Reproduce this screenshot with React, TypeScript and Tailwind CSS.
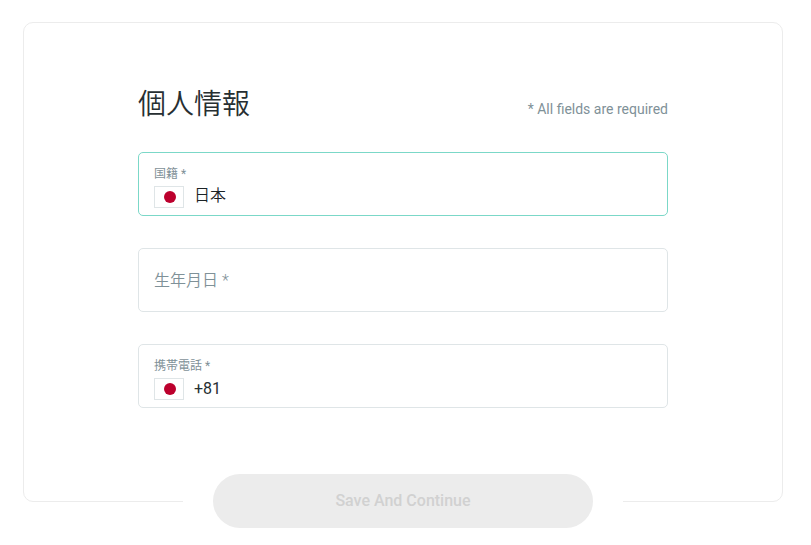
import type { ReactNode } from "react";

export default function App() {
  return (
    <main className="h-[545px] bg-white px-[23px] pt-[22px] font-['Roboto','Noto_Sans_CJK_JP',sans-serif] text-[#272f32]">
      <section className="relative h-[480px] w-[760px] rounded-[10px] border border-[#ececec] px-[114px] pt-[61px]">
        <header className="flex h-[68px] items-start justify-between">
          <h1 className="mt-px text-[28px] leading-[40px] font-[350]">個人情報</h1>
          <p className="mt-[15px] text-sm leading-5 text-[#7f9198]">* All fields are required</p>
        </header>

        <div className="flex flex-col gap-8">
          <Field label="国籍 *" active>
            <span className="text-base leading-6 font-[350] text-[#1c2326]">日本</span>
          </Field>
          <div className="flex h-16 items-center rounded-[5px] border border-[#dfe5e7] px-[15px] pt-0.5 text-base font-[350] text-[#7f9198]">
            生年月日 *
          </div>
          <Field label="携帯電話 *">
            <span className="mt-0.5 text-base leading-6">+81</span>
          </Field>
        </div>

        {/* the button sits in a gap of the card's bottom border */}
        <div className="absolute -bottom-[27px] left-[159px] flex w-[440px] justify-center bg-white">
          <button className="h-[54px] w-[380px] rounded-full bg-[#ececec] text-base font-medium text-[#d1d1d1]">
            Save And Continue
          </button>
        </div>
      </section>
    </main>
  );
}

function Field({ label, active, children }: { label: string; active?: boolean; children: ReactNode }) {
  return (
    <div
      className={
        "h-16 rounded-[5px] border px-[15px] pt-3 " +
        (active ? "border-[#7bd8c8]" : "border-[#dfe5e7]")
      }
    >
      <div className="text-xs leading-[18px] text-[#7f9198]">{label}</div>
      <div className="flex h-[26px] items-center gap-[10px]">
        <JapanFlag />
        {children}
      </div>
    </div>
  );
}

function JapanFlag() {
  return (
    <span className="mt-[2px] flex h-[22px] w-[30px] items-center justify-center border border-[#dfe5e7] bg-white pl-0.5">
      <span className="h-3 w-3 rounded-full bg-[#bc002d]" />
    </span>
  );
}
